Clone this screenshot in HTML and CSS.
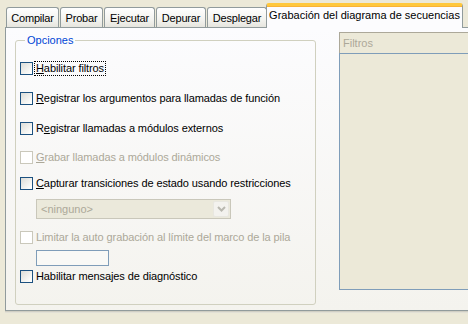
FILE: index.html
```html
<!DOCTYPE html>
<html>
<head>
<meta charset="utf-8">
<link rel="stylesheet" href="styles.css">
</head>
<body>
<div class="window">
  <div class="tabs">
    <div class="tab t-compilar">Compilar</div>
    <div class="tab t-probar">Probar</div>
    <div class="tab t-ejecutar">Ejecutar</div>
    <div class="tab t-depurar">Depurar</div>
    <div class="tab t-desplegar">Desplegar</div>
    <div class="tab active">Grabación del diagrama de secuencias</div>
  </div>
  <div class="panel">
    <fieldset class="group">
      <legend class="group-title">Opciones</legend>
      <label class="row r1"><span class="cb"></span><span class="lbl focus"><u>H</u>abilitar filtros</span></label>
      <label class="row r2"><span class="cb"></span><span class="lbl"><u>R</u>egistrar los argumentos para llamadas de función</span></label>
      <label class="row r3"><span class="cb"></span><span class="lbl">R<u>e</u>gistrar llamadas a módulos externos</span></label>
      <label class="row r4 disabled"><span class="cb"></span><span class="lbl"><u>G</u>rabar llamadas a módulos dinámicos</span></label>
      <label class="row r5"><span class="cb"></span><span class="lbl"><u>C</u>apturar transiciones de estado usando restricciones</span></label>
      <div class="select">
        <span class="select-text">&lt;ninguno&gt;</span>
        <span class="select-btn">
          <svg width="9" height="6" viewBox="0 0 9 6"><path d="M1 1 L4.5 4.5 L8 1" fill="none" stroke="#B9B8B0" stroke-width="2"/></svg>
        </span>
      </div>
      <label class="row r6 disabled"><span class="cb"></span><span class="lbl">Limitar la auto grabación al límite del marco de la pila</span></label>
      <div class="textbox"></div>
      <label class="row r7"><span class="cb"></span><span class="lbl">Habilitar mensajes de diagnóstico</span></label>
    </fieldset>
    <div class="filters">
      <div class="filters-head">Filtros</div>
      <div class="filters-list"></div>
    </div>
  </div>
</div>
</body>
</html>
```
FILE: styles.css
```css
html, body {
  margin: 0;
  padding: 0;
}
body {
  background: #ECE9D8;
  width: 468px;
  height: 324px;
  overflow: hidden;
  font-family: "Liberation Sans", Arial, sans-serif;
  font-size: 11px;
  color: #000;
}
.window {
  padding-left: 5px;
}
.tabs {
  display: flex;
  align-items: flex-end;
  height: 27px;
  padding-left: 1px;
  gap: 1px;
  position: relative;
  z-index: 2;
}
.tab {
  height: 20px;
  box-sizing: border-box;
  border: 1px solid #919B9C;
  border-bottom: none;
  border-radius: 3px 3px 0 0;
  background: linear-gradient(#FFFFFF, #F3F3EF 60%, #E6E5DE);
  line-height: 20px;
  text-align: center;
  white-space: nowrap;
  letter-spacing: -0.2px;
}
.t-compilar { width: 53px; }
.t-probar { width: 43px; }
.t-ejecutar { width: 51px; }
.t-depurar { width: 50px; }
.t-desplegar { width: 60px; }
.tab.active {
  width: 197px;
  height: 25px;
  margin-left: -2px;
  margin-bottom: -1px;
  background: #FCFCFE;
  border-top: 3px solid #FFC83C;
  box-shadow: inset 0 1px 0 #F9B336;
  line-height: 18px;
  letter-spacing: 0;
  border-radius: 3px 3px 0 0;
}
.panel {
  width: 480px;
  height: 284px;
  box-sizing: border-box;
  border: 1px solid #919B9C;
  border-right: none;
  background: linear-gradient(#FCFCFE, #F4F3EE);
  box-shadow: 0 1px 0 #D0CEC3, 0 2px 0 #E2E0D6;
  display: flex;
  align-items: flex-start;
  padding-left: 9px;
}
.group {
  margin: 5px 0 0 0;
  padding: 0 0 0 4px;
  width: 301px;
  height: 272px;
  box-sizing: border-box;
  border: 1px solid #D0D0BF;
  border-radius: 3px;
  display: flex;
  flex-direction: column;
  align-items: flex-start;
  min-inline-size: 0;
}
.group-title {
  color: #0046D5;
  padding: 0 2px;
  margin-left: 5px;
  line-height: 14px;
}
.row {
  display: flex;
  align-items: center;
  height: 13px;
  white-space: nowrap;
}
.row .lbl {
  margin-left: 3px;
  line-height: 13px;
  letter-spacing: -0.1px;
}
.r1 { margin-top: 15px; }
.r2 { margin-top: 17px; }
.r3 { margin-top: 17px; }
.r4 { margin-top: 16px; }
.r5 { margin-top: 13px; }
.r6 { margin-top: 12px; }
.r7 { margin-top: 4px; }
.cb {
  width: 13px;
  height: 13px;
  box-sizing: border-box;
  border: 1px solid #1C5180;
  background: linear-gradient(135deg, #DCDCD7, #FBFBF9 80%, #FFFFFF);
  flex: none;
}
.disabled .cb {
  border-color: #CAC8BB;
  background: #FFFFFF;
}
.disabled .lbl {
  color: #ACA899;
}
.focus {
  outline: 1px dotted #000;
  outline-offset: 0;
  padding: 0 1px;
  margin-left: 2px !important;
}
.select {
  margin: 9px 0 0 16px;
  width: 195px;
  height: 20px;
  box-sizing: border-box;
  border: 1px solid #C9C7BA;
  background: #EBE9DB;
  display: flex;
  align-items: center;
  padding: 1px;
}
.select-text {
  flex: 1;
  color: #ACA899;
  padding-left: 3px;
}
.select-btn {
  width: 16px;
  height: 16px;
  box-sizing: border-box;
  border: 1px solid #E8E7E0;
  border-radius: 2px;
  background: #F3F2EE;
  display: flex;
  align-items: center;
  justify-content: center;
}
.textbox {
  margin: 6px 0 0 16px;
  width: 73px;
  height: 16px;
  box-sizing: border-box;
  border: 1px solid #7F9DB9;
  background: #F9F9F6;
}
.filters {
  margin: 4px 0 0 23px;
  flex: 1;
  display: flex;
  flex-direction: column;
}
.filters-head {
  height: 21px;
  box-sizing: border-box;
  border-top: 1px solid #ACA899;
  border-left: 1px solid #ACA899;
  background: #ECE9D8;
  color: #ACA899;
  padding-left: 3px;
  line-height: 20px;
}
.filters-list {
  height: 237px;
  box-sizing: border-box;
  border: 1px solid #7F9DB9;
  border-right: none;
  background: #ECE9D8;
}
```
